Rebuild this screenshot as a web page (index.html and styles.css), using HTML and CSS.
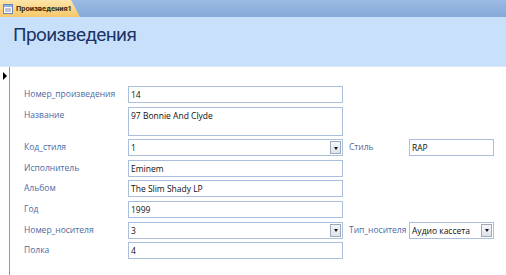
FILE: index.html
```html
<!DOCTYPE html>
<html lang="ru">
<head>
  <meta charset="UTF-8">
  <title>Произведения1</title>
  <link rel="stylesheet" href="styles.css">
</head>
<body>
  <div class="tabs">
    <div class="tab">
      <svg class="tab-icon" width="10" height="10" viewBox="0 0 10 10">
        <rect x="0.5" y="0.5" width="9" height="9" fill="#fff" stroke="#6b87b8"/>
        <rect x="1" y="1" width="8" height="2" fill="#8fb1e0"/>
        <line x1="2" y1="5" x2="8" y2="5" stroke="#7a8db0"/>
        <line x1="2" y1="7" x2="8" y2="7" stroke="#7a8db0"/>
      </svg>
      <span>Произведения1</span>
    </div>
  </div>

  <div class="header">
    <h1>Произведения</h1>
  </div>

  <div class="body">
    <div class="selector"><span class="arrow"></span></div>

    <form class="record">
      <label>Номер_произведения</label>
      <div class="field wide">14</div>

      <label>Название</label>
      <div class="field wide tall">97 Bonnie And Clyde</div>

      <label>Код_стиля</label>
      <div class="field wide combo">1<span class="drop"></span></div>
      <label class="side">Стиль</label>
      <div class="field narrow">RAP</div>

      <label>Исполнитель</label>
      <div class="field wide">Eminem</div>

      <label>Альбом</label>
      <div class="field wide">The Slim Shady LP</div>

      <label>Год</label>
      <div class="field wide">1999</div>

      <label>Номер_носителя</label>
      <div class="field wide combo">3<span class="drop"></span></div>
      <label class="side">Тип_носителя</label>
      <div class="field narrow combo">Аудио кассета<span class="drop"></span></div>

      <label>Полка</label>
      <div class="field wide">4</div>
    </form>
  </div>
</body>
</html>
```

FILE: styles.css
```css
body {
  margin: 0;
  font-family: 'Open Sans', 'Noto Sans', sans-serif;
  background-color: #fff;
  width: 506px;
  height: 275px;
  overflow: hidden;
}

.tabs {
  height: 17px;
  background: linear-gradient(#9bbbe4, #86a9d8);
  display: flex;
}

.tab {
  display: flex;
  align-items: center;
  gap: 3px;
  width: 80px;
  padding-left: 3px;
  box-sizing: border-box;
  background: linear-gradient(#fde6a8, #f6c76b);
  clip-path: polygon(0 0, 71px 0, 80px 100%, 0 100%);
  font-family: 'Roboto', sans-serif;
  font-size: 7.5px;
  font-weight: bold;
  color: #3a2a10;
  white-space: nowrap;
}

.tab-icon {
  flex: none;
}

.header {
  height: 50px;
  background-color: #c9e0fb;
  border-bottom: 1px solid #dbe8f8;
  padding-left: 13px;
  box-sizing: border-box;
  padding-top: 6px;
}

h1 {
  margin: 0;
  font-family: 'Roboto', sans-serif;
  font-weight: normal;
  font-size: 19px;
  line-height: 24px;
  color: #1b3566;
  letter-spacing: -0.6px;
}

.body {
  display: flex;
}

.selector {
  width: 9px;
  height: 210px;
  border-right: 1px solid #8c9bb2;
  position: relative;
}

.arrow {
  position: absolute;
  left: 3px;
  top: 5px;
  border-top: 4px solid transparent;
  border-bottom: 4px solid transparent;
  border-left: 4px solid #000;
}

.record {
  display: grid;
  grid-template-columns: 104px 215px 66px 85px;
  grid-template-rows: 17px 29px 17px 17px 17px 17px 17px 17px;
  row-gap: 3.6px;
  align-items: start;
  padding: 19px 0 0 14px;
  font-size: 8.5px;
  line-height: 12px;
}

.record label {
  grid-column: 1;
  color: #4c6ba3;
  padding-top: 2px;
}

.record label.side {
  grid-column: 3;
  padding-left: 6px;
}

.field {
  height: 17px;
  box-sizing: border-box;
  border: 1px solid #a9bfdc;
  padding: 2px 0 0 2px;
  color: #111;
  background: #fff;
  position: relative;
  white-space: nowrap;
}

.wide {
  grid-column: 2;
}

.narrow {
  grid-column: 4;
}

.tall {
  height: 29px;
}

.drop {
  position: absolute;
  right: 1px;
  top: 1px;
  width: 11px;
  height: 13px;
  box-sizing: border-box;
  border: 1px solid #9fa9b8;
  background: linear-gradient(#f4f6f9, #dde2ea);
}

.drop::after {
  content: "";
  position: absolute;
  left: 2.5px;
  top: 4.5px;
  border-left: 2.5px solid transparent;
  border-right: 2.5px solid transparent;
  border-top: 3px solid #111;
}
```
